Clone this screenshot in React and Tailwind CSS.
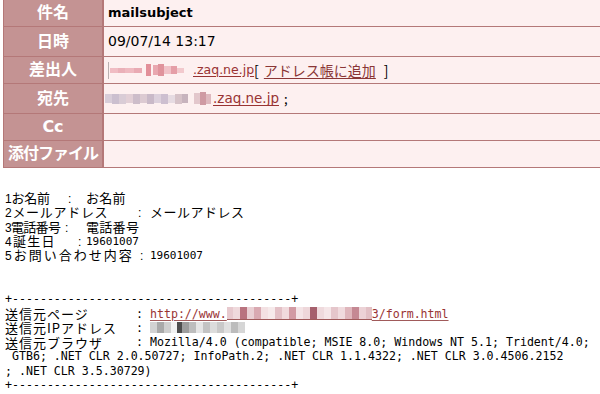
import React from "react";

const JP = { fontFamily: '"DejaVu Sans", "Noto Sans CJK JP", sans-serif' };

function Mosaic({ cells, className = "" }) {
  return (
    <span className={"inline-flex items-center shrink-0 " + className}>
      {cells.map(([w, h, c], i) => (
        <span
          key={i}
          className="inline-block shrink-0"
          style={{ width: w, height: h, background: c || "transparent" }}
        />
      ))}
    </span>
  );
}

const senderBlur = [
  [1, 17, "#b9b0b0"],
  [1, 0, null],
  [8, 5, "#f0bcc3"],
  [7, 5, "#eab0b8"],
  [9, 5, "#efb9c0"],
  [8, 5, "#e9aab3"],
  [4, 0, null],
  [5, 12, "#e28f99"],
  [2, 0, null],
  [5, 10, "#e9a7af"],
  [6, 12, "#e0939c"],
  [7, 8, "#f1c2c8"],
  [6, 8, "#e59ea7"],
  [7, 5, "#f2c9cd"],
];

const rcptBlur = [
  [7, 9, "#d8cdd9"],
  [7, 10, "#cbbfcf"],
  [7, 10, "#d9ccd6"],
  [7, 9, "#e2cfd6"],
  [7, 10, "#cdbdca"],
  [7, 9, "#dccad2"],
  [7, 10, "#c9b9c8"],
  [7, 9, "#dcd0dc"],
  [7, 10, "#cdbfd0"],
  [7, 8, "#e6dbe2"],
  [7, 10, "#d6c2c8"],
  [6, 9, "#c7b3bd"],
  [6, 0, null],
  [6, 11, "#e3c7cc"],
  [6, 13, "#cf9aa3"],
  [5, 10, "#deb8be"],
];

const urlBlur = [
  [6, 12, "#e7c9ce"],
  [7, 12, "#efd9dc"],
  [7, 12, "#b9737f"],
  [7, 12, "#e9cfd3"],
  [7, 12, "#d9a9b1"],
  [7, 12, "#f3e1e3"],
  [7, 12, "#f6eaeb"],
  [7, 12, "#e3c0c6"],
  [7, 12, "#f1dadd"],
  [7, 12, "#d29aa3"],
  [7, 12, "#f4e4e6"],
  [7, 12, "#eed7da"],
  [7, 12, "#a6606d"],
  [7, 12, "#efdadd"],
  [7, 12, "#f5e6e8"],
  [7, 12, "#e5c6cb"],
  [7, 12, "#f0dbde"],
  [7, 12, "#dfb6bc"],
  [7, 12, "#c58893"],
  [7, 12, "#ecd2d6"],
  [6, 12, "#e2c0c5"],
];

const ipBlur = [
  [7, 11, "#d2d2d2"],
  [7, 11, "#a9a9a9"],
  [7, 11, "#cfcfcf"],
  [6, 11, "#f2f2f2"],
  [5, 11, "#4d4d4d"],
  [7, 11, "#9d9d9d"],
  [7, 11, "#bdbdbd"],
  [7, 11, "#e5e5e5"],
  [7, 11, "#c3c3c3"],
  [7, 11, "#dcdcdc"],
  [7, 11, "#c9c9c9"],
  [7, 11, "#e0e0e0"],
  [7, 11, "#bcbcbc"],
  [7, 11, "#d6d6d6"],
];

function Row({ label, h, children, labelClass = "" }) {
  return (
    <div className={"flex border-b border-[#b47878] " + h}>
      <div
        className={
          "w-[100px] shrink-0 bg-[#c49393] border-r-2 border-[#b47878] flex items-center justify-center text-white font-bold text-[16px] " +
          labelClass
        }
        style={JP}
      >
        {label}
      </div>
      <div className="flex-1 bg-[#fdf0f0] flex items-center pl-[4px]" style={JP}>
        {children}
      </div>
    </div>
  );
}

const MONO = { fontFamily: '"DejaVu Sans Mono", monospace' };
const CJK = { fontFamily: '"Noto Sans CJK JP", sans-serif' };
const BODY = { fontFamily: '"Liberation Sans", "Noto Sans CJK JP", sans-serif' };

function Line({ children }) {
  return (
    <div className="flex items-center h-[14.3px] leading-[14px] whitespace-pre text-black">
      {children}
    </div>
  );
}

function Label({ children }) {
  return (
    <span className="inline-block w-[131px] text-[13px] leading-[13px] tracking-[1px]" style={CJK}>
      {children}
    </span>
  );
}

export default function App() {
  const dash = "+" + "-".repeat(40) + "+";
  return (
    <div className="w-[600px] h-[394px] bg-white overflow-hidden">
      <div className="pl-[3px] overflow-hidden">
        <div className="w-[700px] border-l border-[#b47878]">
          <Row label="件名" h="h-[27px]">
            <span className="font-bold text-[13px] text-black">mailsubject</span>
          </Row>
          <Row label="日時" h="h-[30px]">
            <span className="text-[14px] text-black">09/07/14 13:17</span>
          </Row>
          <Row label="差出人" h="h-[27px]">
            <span className="text-black flex items-center">
              <Mosaic cells={senderBlur} />
              <span className="ml-[9px] text-[12.5px] text-[#993333] underline underline-offset-2">.zaq.ne.jp</span>
              <span className="text-[14px]" style={CJK}>[</span>
              <span className="ml-[5px] text-[14px] text-[#8a3636] underline underline-offset-2" style={CJK}>
                アドレス帳に追加
              </span>
              <span className="ml-[8px] text-[14px]" style={CJK}>]</span>
            </span>
          </Row>
          <Row label="宛先" h="h-[30px]">
            <span className="text-black flex items-center -ml-[3px]">
              <Mosaic cells={rcptBlur} />
              <span className="ml-[2px] text-[13.5px] text-[#993333] underline underline-offset-2">.zaq.ne.jp</span>
              <span className="ml-[5px] text-[13px]" style={CJK}>;</span>
            </span>
          </Row>
          <Row label="Cc" h="h-[27px]" />
          <Row label="添付ファイル" h="h-[27px]" labelClass="tracking-[-1px]" />
        </div>
      </div>

      <div className="mt-[24px] pl-[5px] text-[13px]" style={BODY}>
        <Line>
          <span className="inline-block w-[63px] text-[12px] tracking-[-0.2px]">1<span className="text-[13px]">お名前</span></span>
          <span className="inline-block w-[18px] text-[12px]">:</span>
          <span className="tracking-[0.3px]">お名前</span>
        </Line>
        <Line>
          <span className="inline-block w-[133px] tracking-[0.7px]"><span className="text-[12px]">2</span>メールアドレス</span>
          <span className="inline-block w-[12px] text-[12px]">:</span>
          <span className="tracking-[0.5px]">メールアドレス</span>
        </Line>
        <Line>
          <span className="inline-block w-[60px] tracking-[-0.7px]"><span className="text-[12px]">3</span>電話番号</span>
          <span className="inline-block w-[21px] text-[12px]">:</span>
          <span className="tracking-[0.3px]">電話番号</span>
        </Line>
        <Line>
          <span className="inline-block w-[73px] tracking-[1.3px]"><span className="text-[12px]">4</span>誕生日</span>
          <span className="inline-block w-[8px] text-[12px]">:</span>
          <span className="text-[11px]" style={MONO}>19601007</span>
        </Line>
        <Line>
          <span className="inline-block w-[135px] tracking-[2px]"><span className="text-[12px]">5</span>お問い合わせ内容</span>
          <span className="inline-block w-[10px] text-[12px]">:</span>
          <span className="text-[11px]" style={MONO}>19601007</span>
        </Line>
        <Line> </Line>
        <Line> </Line>

        <div className="text-[11.6px]" style={MONO}>
          <Line>{dash}</Line>
          <Line>
            <Label>送信元ページ</Label>
            <span>: </span>
            <span className="flex items-center text-[#993333] underline underline-offset-2 decoration-[#a05a5a]">
              <span>http://www.</span>
              <span className="flex flex-col">
                <Mosaic cells={urlBlur} />
                <span className="h-[1px] bg-[#a05a5a]" />
              </span>
              <span>3/form.html</span>
            </span>
          </Line>
          <Line>
            <Label>送信元IPアドレス</Label>
            <span>: </span>
            <Mosaic cells={ipBlur} />
          </Line>
          <Line>
            <Label>送信元ブラウザ</Label>
            <span>: Mozilla/4.0 (compatible; MSIE 8.0; Windows NT 5.1; Trident/4.0;</span>
          </Line>
          <Line> GTB6; .NET CLR 2.0.50727; InfoPath.2; .NET CLR 1.1.4322; .NET CLR 3.0.4506.2152</Line>
          <Line>; .NET CLR 3.5.30729)</Line>
          <Line>{dash}</Line>
        </div>
      </div>
    </div>
  );
}
